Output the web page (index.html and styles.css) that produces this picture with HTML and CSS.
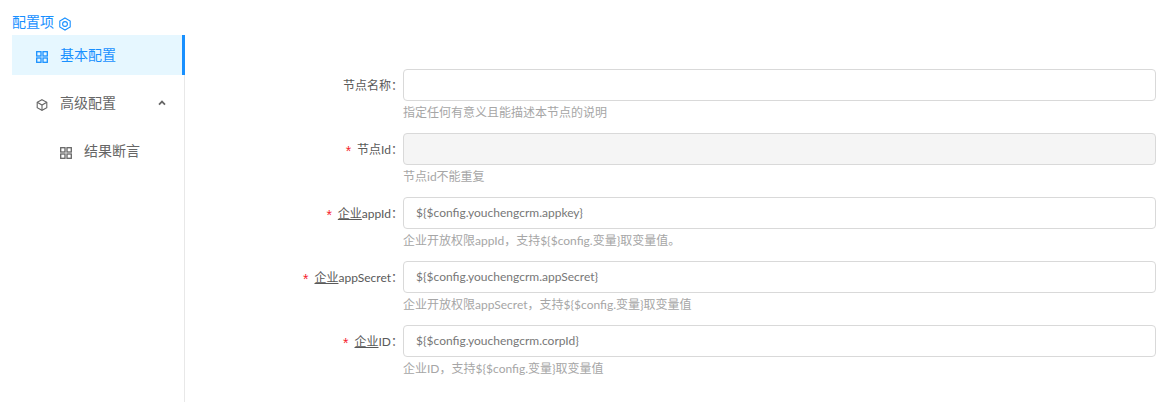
FILE: index.html
```html
<!DOCTYPE html>
<html lang="zh-CN">
<head>
    <meta charset="UTF-8">
    <meta name="viewport" content="width=device-width, initial-scale=1.0">
    <title>配置项</title>
    <link rel="stylesheet" href="styles.css">
</head>
<body>
    <div class="page">
        <aside class="sidebar">
            <div class="side-title">
                <span>配置项</span>
                <svg class="title-icon" viewBox="0 0 14 14" fill="none" stroke="currentColor" stroke-width="1.1">
                    <path d="M7 1l5.2 3v6L7 13l-5.2-3V4z"/>
                    <circle cx="7" cy="7" r="2.4"/>
                </svg>
            </div>
            <ul class="menu">
                <li class="menu-item active">
                    <svg class="menu-icon" viewBox="0 0 12 12" fill="none" stroke="currentColor" stroke-width="1.3">
                        <rect x="0.7" y="0.7" width="4.3" height="4.3"/>
                        <rect x="7" y="0.7" width="4.3" height="4.3"/>
                        <rect x="0.7" y="7" width="4.3" height="4.3"/>
                        <rect x="7" y="7" width="4.3" height="4.3"/>
                    </svg>
                    <span class="menu-text">基本配置</span>
                </li>
                <li class="menu-item">
                    <svg class="menu-icon" viewBox="0 0 12 12" fill="none" stroke="currentColor" stroke-width="1.1">
                        <path d="M6 .7l4.8 2.6v5.4L6 11.3 1.2 8.7V3.3z"/>
                        <path d="M1.2 3.3L6 6l4.8-2.7M6 6v5.3"/>
                    </svg>
                    <span class="menu-text">高级配置</span>
                    <svg class="arrow" viewBox="0 0 8 6" fill="none" stroke="currentColor" stroke-width="1.8">
                        <path d="M1 4.6l3-3 3 3"/>
                    </svg>
                </li>
                <li class="menu-item sub">
                    <svg class="menu-icon" viewBox="0 0 12 12" fill="none" stroke="currentColor" stroke-width="1.3">
                        <rect x="0.7" y="0.7" width="4.3" height="4.3"/>
                        <rect x="7" y="0.7" width="4.3" height="4.3"/>
                        <rect x="0.7" y="7" width="4.3" height="4.3"/>
                        <rect x="7" y="7" width="4.3" height="4.3"/>
                    </svg>
                    <span class="menu-text">结果断言</span>
                </li>
            </ul>
        </aside>

        <main class="form">
            <div class="form-row">
                <label class="form-label">节点名称：</label>
                <div class="form-field">
                    <input class="form-input" type="text">
                    <p class="form-help">指定任何有意义且能描述本节点的说明</p>
                </div>
            </div>
            <div class="form-row">
                <label class="form-label"><i class="req">*</i>节点Id：</label>
                <div class="form-field">
                    <input class="form-input" type="text" disabled>
                    <p class="form-help">节点id不能重复</p>
                </div>
            </div>
            <div class="form-row">
                <label class="form-label"><i class="req">*</i><u>企业</u>appId：</label>
                <div class="form-field">
                    <input class="form-input" type="text" value="${$config.youchengcrm.appkey}">
                    <p class="form-help">企业开放权限appId，支持${$config.变量}取变量值。</p>
                </div>
            </div>
            <div class="form-row">
                <label class="form-label"><i class="req">*</i><u>企业</u>appSecret：</label>
                <div class="form-field">
                    <input class="form-input" type="text" value="${$config.youchengcrm.appSecret}">
                    <p class="form-help">企业开放权限appSecret，支持${$config.变量}取变量值</p>
                </div>
            </div>
            <div class="form-row">
                <label class="form-label"><i class="req">*</i><u>企业</u>ID：</label>
                <div class="form-field">
                    <input class="form-input" type="text" value="${$config.youchengcrm.corpId}">
                    <p class="form-help">企业ID，支持${$config.变量}取变量值</p>
                </div>
            </div>
        </main>
    </div>
</body>
</html>
```

FILE: styles.css
```css
* {
    margin: 0;
    padding: 0;
    box-sizing: border-box;
    font-family: 'Lato', 'Noto Sans CJK SC', sans-serif;
}

:root {
    --blue: #1890ff;
    --blue-bg: #e6f7ff;
    --text: #666;
    --label: #595959;
    --help: #a6a6a6;
    --line: #d9d9d9;
}

body {
    background: #fff;
    color: var(--text);
    overflow: hidden;
}

.page {
    display: flex;
    height: 402px;
}

/* Sidebar */
.sidebar {
    width: 185px;
    padding-left: 12px;
    padding-top: 13px;
    flex-shrink: 0;
}

.side-title {
    display: flex;
    align-items: center;
    gap: 4px;
    height: 18px;
    margin-bottom: 4px;
    font-size: 14px;
    line-height: 16px;
    color: var(--blue);
}

.title-icon {
    width: 14px;
    height: 14px;
    margin-top: 3px;
}

.menu {
    list-style: none;
    height: 367px;
    border-right: 1px solid #e8e8e8;
}

.menu-item {
    display: flex;
    align-items: center;
    height: 40px;
    margin-bottom: 8px;
    padding-left: 24px;
    font-size: 14px;
    color: var(--text);
}

.menu-item.active {
    margin-right: -1px;
    color: var(--blue);
    background: var(--blue-bg);
    border-right: 3px solid var(--blue);
}

.menu-item.sub {
    padding-left: 48px;
}

.menu-icon {
    width: 12px;
    height: 12px;
    margin-top: 3px;
    margin-right: 12px;
    flex-shrink: 0;
}

.menu-text {
    margin-bottom: 3px;
}

.arrow {
    width: 8px;
    height: 6px;
    margin-left: 42px;
    margin-bottom: 1px;
}

/* Form */
.form {
    flex: 1;
    padding-top: 69px;
}

.form-row {
    display: flex;
    height: 64px;
}

.form-label {
    width: 218px;
    height: 32px;
    font-size: 12px;
    line-height: 33px;
    text-align: right;
    color: var(--label);
    white-space: nowrap;
}

.req {
    margin-right: 6px;
    font-style: normal;
    font-family: 'Liberation Sans', sans-serif;
    font-size: 14px;
    vertical-align: -2px;
    line-height: 1;
    color: #f5222d;
}

.form-field {
    width: 753px;
}

.form-input {
    display: block;
    width: 100%;
    height: 32px;
    padding: 0 12px 2px;
    border: 1px solid var(--line);
    border-radius: 4px;
    background: #fff;
    font-size: 12px;
    color: #777;
    outline: none;
}

.form-input:disabled {
    background: #f5f5f5;
}

.form-help {
    font-size: 12px;
    line-height: 24px;
    color: var(--help);
}
```
